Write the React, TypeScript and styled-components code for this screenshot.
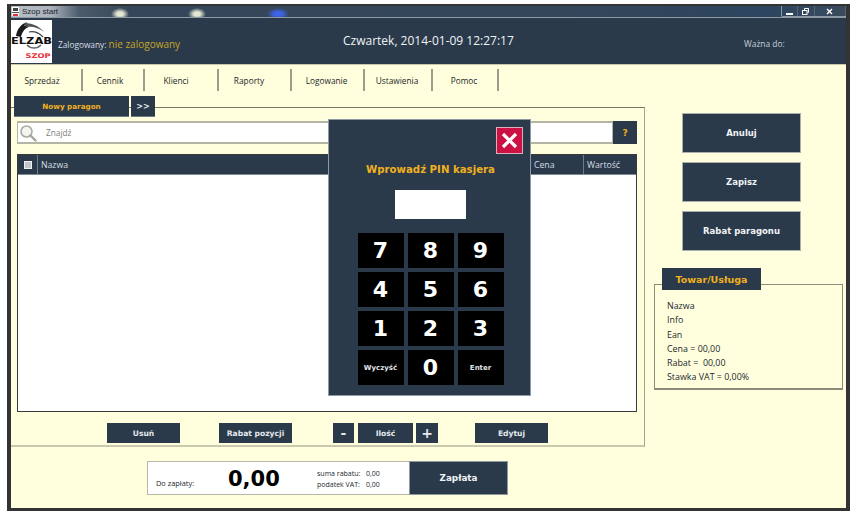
import styled, { createGlobalStyle } from "styled-components";

const navy = "#2a3a4b";
const cream = "#ffffdd";
const amber = "#f0b020";
const line = "#a5a58c";

const GlobalStyle = createGlobalStyle`
  html, body {
    margin: 0;
    background: #ffffff;
  }
  * {
    box-sizing: border-box;
  }
`;

const Page = styled.div`
  position: relative;
  width: 856px;
  height: 520px;
  padding: 4px 0 0 7px;
  font-family: "DejaVu Sans", sans-serif;
`;

const Window = styled.div`
  width: 843px;
  height: 507px;
  border-style: solid;
  border-color: #333333;
  border-width: 2px 4px 3px 4px;
  background: ${cream};
  display: flex;
  flex-direction: column;
`;

const TitleBar = styled.div`
  height: 12px;
  flex: none;
  display: flex;
  align-items: center;
  padding-left: 1px;
  gap: 3px;
  border-bottom: 1px solid #8d99a5;
  background:
    radial-gradient(ellipse 9px 6px at 109px 8px, #e2e8d4 35%, rgba(226, 232, 212, 0) 100%),
    radial-gradient(ellipse 9px 6px at 186px 8px, #e2e8d4 35%, rgba(226, 232, 212, 0) 100%),
    radial-gradient(ellipse 11px 6px at 267px 8px, #3f63e8 35%, rgba(63, 99, 232, 0) 100%),
    linear-gradient(90deg, #b8c0c8 0, #aab2bc 40px, #4c5c6c 68px, #35465a 120px, #34465a 560px, #2d4560 760px, #3a4a5c 100%);
`;

const TitleText = styled.span`
  font-family: "Liberation Sans", sans-serif;
  font-size: 8px;
  line-height: 10px;
  color: #1c2228;
`;

const WindowControls = styled.div`
  margin-left: auto;
  height: 100%;
  width: 65px;
  display: flex;
  border-left: 1px solid #8d99a5;
  border-bottom: 1px solid #8d99a5;
  border-radius: 0 0 0 2px;
`;

const ControlButton = styled.div<{ $wide?: boolean }>`
  flex: ${(p) => (p.$wide ? 2 : 1)};
  display: flex;
  align-items: center;
  justify-content: center;
  border-right: 1px solid #566676;
  color: #ffffff;
`;

const Header = styled.header`
  height: 47px;
  flex: none;
  background: ${navy};
  border-bottom: 1px solid #c9c9b0;
  display: flex;
  padding: 2px 0 0 0;
`;

const LogoBox = styled.div`
  width: 41px;
  height: 43px;
  background: #ffffff;
  flex: none;
`;

const UserInfo = styled.div`
  margin-left: 6px;
  width: 285px;
  padding-top: 17px;
  font-family: "Open Sans", sans-serif;
  font-size: 8.3px;
  line-height: 14px;
  color: #d9dfe5;
  white-space: nowrap;
`;

const UserName = styled.span`
  font-size: 10px;
  color: #c8a428;
`;

const DateText = styled.div`
  width: 401px;
  padding-top: 13px;
  font-family: "Open Sans", sans-serif;
  font-size: 12px;
  line-height: 16px;
  color: #f0f2f4;
  white-space: nowrap;
`;

const ValidText = styled.div`
  padding-top: 18px;
  font-family: "Open Sans", sans-serif;
  font-size: 8.4px;
  line-height: 12px;
  color: #c8d0d8;
  white-space: nowrap;
`;

const Menu = styled.nav`
  flex: none;
  height: 31px;
  display: flex;
  padding-top: 4px;
  align-items: flex-start;
`;

const MenuItem = styled.div<{ $width: number; $shift: number }>`
  width: ${(p) => p.$width}px;
  height: 22px;
  padding-right: ${(p) => p.$shift}px;
  border-right: 2px solid #9c9c8c;
  display: flex;
  align-items: center;
  justify-content: center;
  font-family: "Open Sans", sans-serif;
  font-size: 8.3px;
  color: #20262c;
`;

const Content = styled.div`
  display: flex;
  flex: none;
`;

const LeftColumn = styled.div`
  width: 634px;
  flex: none;
`;

const Tabs = styled.div`
  height: 21px;
  display: flex;
  gap: 2px;
  padding-left: 3px;
  margin-bottom: -10px;
  position: relative;
`;

const Tab = styled.div<{ $width: number; $amber?: boolean }>`
  width: ${(p) => p.$width}px;
  background: ${navy};
  border-bottom: 1px solid #6a7886;
  display: flex;
  align-items: center;
  justify-content: center;
  font-size: ${(p) => (p.$amber ? 7.2 : 8)}px;
  font-weight: bold;
  color: ${(p) => (p.$amber ? amber : "#e8ecf0")};
`;

const Panel = styled.section`
  height: 340px;
  border-top: 1px solid #77776a;
  border-right: 1px solid ${line};
  border-bottom: 2px solid #c9c9b0;
  padding: 13px 7px 0 6px;
`;

const SearchRow = styled.div`
  height: 23px;
  display: flex;
`;

const SearchField = styled.div`
  flex: 1;
  background: #ffffff;
  border: 1px solid #b5b5a5;
  border-bottom-width: 2px;
  border-top-width: 2px;
  display: flex;
  align-items: center;
  padding-left: 1px;
`;

const SearchText = styled.span`
  margin-left: 9px;
  font-family: "Open Sans", sans-serif;
  font-size: 8.3px;
  color: #7b7b7b;
`;

const HelpButton = styled.div`
  width: 24px;
  background: ${navy};
  display: flex;
  align-items: center;
  justify-content: center;
  font-size: 9px;
  font-weight: bold;
  color: ${amber};
`;

const Table = styled.div`
  margin-top: 10px;
  height: 258px;
  background: #ffffff;
  border: 1px solid #3a3a3a;
`;

const TableHead = styled.div`
  height: 20px;
  background: ${navy};
  border-bottom: 1px solid #7f8b96;
  display: grid;
  grid-template-columns: 20px 1fr 53px 52px;
  font-family: "Open Sans", sans-serif;
  font-size: 8.7px;
  color: #d8dee4;
`;

const HeadCell = styled.div<{ $last?: boolean }>`
  display: flex;
  align-items: center;
  padding-left: 3px;
  border-right: ${(p) => (p.$last ? "none" : "1px solid #6f7c88")};
`;

const CheckCell = styled(HeadCell)`
  justify-content: center;
  padding-left: 0;
`;

const CheckBox = styled.span`
  width: 8px;
  height: 8px;
  background: #c4c8cc;
  border: 1px solid #eef0f2;
`;

const Actions = styled.div`
  margin-top: 11px;
  height: 20px;
  padding-left: 90px;
  display: flex;
`;

const ActionButton = styled.div<{ $width: number; $gap?: number; $large?: boolean }>`
  width: ${(p) => p.$width}px;
  margin-right: ${(p) => p.$gap ?? 0}px;
  background: ${navy};
  display: flex;
  align-items: center;
  justify-content: center;
  font-size: ${(p) => (p.$large ? 14 : 7.6)}px;
  font-weight: bold;
  color: #e4e8ec;
`;

const RightColumn = styled.aside`
  padding: 17px 0 0 9px;
`;

const SideButtons = styled.div`
  margin-left: 28px;
  display: flex;
  flex-direction: column;
  gap: 9px;
`;

const SideButton = styled.div`
  width: 119px;
  height: 40px;
  background: ${navy};
  border: 1px solid #aab0ac;
  display: flex;
  align-items: center;
  justify-content: center;
  font-size: 8.5px;
  font-weight: bold;
  color: #f0f3f6;
`;

const GoodsTab = styled.div`
  width: 99px;
  height: 22px;
  margin: 17px 0 -6px 8px;
  position: relative;
  background: ${navy};
  display: flex;
  align-items: center;
  justify-content: center;
  font-size: 9.5px;
  font-weight: bold;
  color: ${amber};
`;

const GoodsBox = styled.div`
  width: 189px;
  height: 106px;
  border: 1px solid #8c8c7c;
  border-bottom-width: 2px;
  padding: 14px 0 0 12px;
  font-family: "Open Sans", sans-serif;
  font-size: 8.9px;
  line-height: 14.3px;
  color: #22282e;
  white-space: pre;
`;

const Footer = styled.div`
  padding: 14px 0 0 136px;
  display: flex;
`;

const PayBox = styled.div`
  width: 262px;
  height: 34px;
  background: #ffffff;
  border: 1px solid #b8b8a8;
  border-right: none;
  display: flex;
  align-items: center;
  font-family: "Open Sans", sans-serif;
  color: #22282e;
`;

const PayLabel = styled.span`
  width: 80px;
  padding: 9px 0 0 8px;
  font-size: 7.4px;
  white-space: nowrap;
`;

const PayAmount = styled.span`
  width: 89px;
  margin-top: 2px;
  font-family: "DejaVu Sans", sans-serif;
  font-size: 21px;
  font-weight: bold;
  line-height: 28px;
  color: #000000;
`;

const PaySummary = styled.div`
  margin-top: 2px;
  display: grid;
  grid-template-columns: 49px auto;
  font-size: 7px;
  line-height: 11px;
  white-space: nowrap;
`;

const PayButton = styled.div`
  width: 99px;
  height: 34px;
  background: ${navy};
  border: 1px solid #8f989e;
  display: flex;
  align-items: center;
  justify-content: center;
  font-size: 8.8px;
  font-weight: bold;
  color: #f0f3f6;
`;

const Modal = styled.div`
  position: absolute;
  left: 328px;
  top: 119px;
  width: 203px;
  height: 277px;
  padding-left: 2px;
  background: ${navy};
  border: 1px solid #8d99a5;
  display: flex;
  flex-direction: column;
  align-items: center;
`;

const CloseButton = styled.div`
  align-self: flex-end;
  width: 27px;
  height: 27px;
  margin: 7px 7px 0 0;
  background: #cc1144;
  border: 1px solid #d8b0bc;
  display: flex;
  align-items: center;
  justify-content: center;
`;

const ModalTitle = styled.div`
  margin-top: 9px;
  font-size: 10.2px;
  line-height: 14px;
  font-weight: bold;
  color: ${amber};
  white-space: nowrap;
`;

const PinInput = styled.div`
  margin-top: 13px;
  width: 71px;
  height: 29px;
  background: #ffffff;
`;

const Keypad = styled.div`
  margin-top: 14px;
  display: grid;
  grid-template-columns: repeat(3, 46px);
  grid-auto-rows: 35px;
  gap: 4px;
`;

const Key = styled.div<{ $small?: boolean }>`
  background: #000000;
  display: flex;
  align-items: center;
  justify-content: center;
  font-size: ${(p) => (p.$small ? 7 : 22)}px;
  font-weight: bold;
  color: ${(p) => (p.$small ? "#e0e4e8" : "#ffffff")};
`;

const menu: [string, number, number][] = [
  ["Sprzedaż", 72, 8],
  ["Cennik", 62, 6],
  ["Klienci", 74, 10],
  ["Raporty", 73, 11],
  ["Logowanie", 73, 2],
  ["Ustawienia", 68, 2],
  ["Pomoc", 66, 2],
];

const keys = ["7", "8", "9", "4", "5", "6", "1", "2", "3", "Wyczyść", "0", "Enter"];

const goods = ["Nazwa", "Info", "Ean", "Cena = 00,00", "Rabat =  00,00", "Stawka VAT = 0,00%"];

const Logo = () => (
  <svg width="41" height="43" viewBox="0 0 41 43">
    <path d="M5 16 C6 9 10 4 16 2 L13 6 C15 5 17 6 18 7 C14 8 11 12 10 17 Z" fill="#1a1a1a" />
    <path d="M13 3 C20 3 27 5 33 12 C28 8 22 6 15 7 Z" fill="#555" />
    <path d="M18 12 C23 11 28 13 32 17" fill="none" stroke="#444" strokeWidth="1.2" />
    <path d="M16 25 C20 29 26 29 30 25" fill="none" stroke="#666" strokeWidth="1.5" />
    <text x="20.5" y="24" textAnchor="middle" fontFamily="DejaVu Sans" fontWeight="bold" fontSize="9.5" textLength="41" lengthAdjust="spacingAndGlyphs" fill="#111">
      ELZAB
    </text>
    <text x="27" y="38" textAnchor="middle" fontFamily="DejaVu Sans" fontWeight="bold" fontSize="6.5" textLength="25" lengthAdjust="spacingAndGlyphs" fill="#e8303a">
      SZOP
    </text>
  </svg>
);

const AppIcon = () => (
  <svg width="7" height="9" viewBox="0 0 7 9">
    <rect width="7" height="9" fill="#ffffff" />
    <rect x="1" y="1" width="5" height="3" fill="#444" />
    <rect x="0" y="5" width="7" height="1" fill="#555" />
    <rect x="1" y="7" width="5" height="2" fill="#e8303a" />
  </svg>
);

const SearchIcon = () => (
  <svg width="18" height="18" viewBox="0 0 18 18" fill="none">
    <circle cx="7.5" cy="7.5" r="5.5" stroke="#a9aca6" strokeWidth="1.6" fill="#f4f4f0" />
    <path d="M11.5 11.5 L16.5 16.5" stroke="#a4a69c" strokeWidth="2.4" strokeLinecap="round" />
  </svg>
);

const App = () => (
  <Page>
    <GlobalStyle />
    <Window>
      <TitleBar>
        <AppIcon />
        <TitleText>Szop start</TitleText>
        <WindowControls>
          <ControlButton>
            <svg width="7" height="7" viewBox="0 0 7 7">
              <rect x="0" y="5" width="7" height="2" fill="#fff" />
            </svg>
          </ControlButton>
          <ControlButton>
            <svg width="7" height="7" viewBox="0 0 7 7" fill="none" stroke="#fff">
              <rect x="0.5" y="2.5" width="4.5" height="4" />
              <path d="M2.5 2 V0.5 H6.5 V4.5 H5.5" />
            </svg>
          </ControlButton>
          <ControlButton $wide>
            <svg width="7" height="7" viewBox="0 0 7 7" stroke="#fff" strokeWidth="1.4">
              <path d="M1 1 L6 6 M6 1 L1 6" />
            </svg>
          </ControlButton>
        </WindowControls>
      </TitleBar>
      <Header>
        <LogoBox>
          <Logo />
        </LogoBox>
        <UserInfo>
          Zalogowany: <UserName>nie zalogowany</UserName>
        </UserInfo>
        <DateText>Czwartek, 2014-01-09 12:27:17</DateText>
        <ValidText>Ważna do:</ValidText>
      </Header>
      <Menu>
        {menu.map(([label, width, shift]) => (
          <MenuItem key={label} $width={width} $shift={shift}>
            {label}
          </MenuItem>
        ))}
      </Menu>
      <Content>
        <LeftColumn>
          <Tabs>
            <Tab $width={115} $amber>
              Nowy paragon
            </Tab>
            <Tab $width={24}>&gt;&gt;</Tab>
          </Tabs>
          <Panel>
            <SearchRow>
              <SearchField>
                <SearchIcon />
                <SearchText>Znajdź</SearchText>
              </SearchField>
              <HelpButton>?</HelpButton>
            </SearchRow>
            <Table>
              <TableHead>
                <CheckCell>
                  <CheckBox />
                </CheckCell>
                <HeadCell>Nazwa</HeadCell>
                <HeadCell>Cena</HeadCell>
                <HeadCell $last>Wartość</HeadCell>
              </TableHead>
            </Table>
            <Actions>
              <ActionButton $width={73} $gap={39}>Usuń</ActionButton>
              <ActionButton $width={73} $gap={41}>Rabat pozycji</ActionButton>
              <ActionButton $width={21} $gap={4} $large>-</ActionButton>
              <ActionButton $width={55} $gap={3}>Ilość</ActionButton>
              <ActionButton $width={22} $gap={37} $large>+</ActionButton>
              <ActionButton $width={73}>Edytuj</ActionButton>
            </Actions>
          </Panel>
        </LeftColumn>
        <RightColumn>
          <SideButtons>
            <SideButton>Anuluj</SideButton>
            <SideButton>Zapisz</SideButton>
            <SideButton>Rabat paragonu</SideButton>
          </SideButtons>
          <GoodsTab>Towar/Usługa</GoodsTab>
          <GoodsBox>
            {goods.map((row) => (
              <div key={row}>{row}</div>
            ))}
          </GoodsBox>
        </RightColumn>
      </Content>
      <Footer>
        <PayBox>
          <PayLabel>Do zapłaty:</PayLabel>
          <PayAmount>0,00</PayAmount>
          <PaySummary>
            <span>suma rabatu:</span>
            <span>0,00</span>
            <span>podatek VAT:</span>
            <span>0,00</span>
          </PaySummary>
        </PayBox>
        <PayButton>Zapłata</PayButton>
      </Footer>
    </Window>
    <Modal>
      <CloseButton>
        <svg width="17" height="17" viewBox="0 0 17 17" stroke="#ffffff" strokeWidth="3.2">
          <path d="M2 2 L15 15 M15 2 L2 15" />
        </svg>
      </CloseButton>
      <ModalTitle>Wprowadź PIN kasjera</ModalTitle>
      <PinInput />
      <Keypad>
        {keys.map((k) => (
          <Key key={k} $small={k.length > 1}>
            {k}
          </Key>
        ))}
      </Keypad>
    </Modal>
  </Page>
);

export default App;
